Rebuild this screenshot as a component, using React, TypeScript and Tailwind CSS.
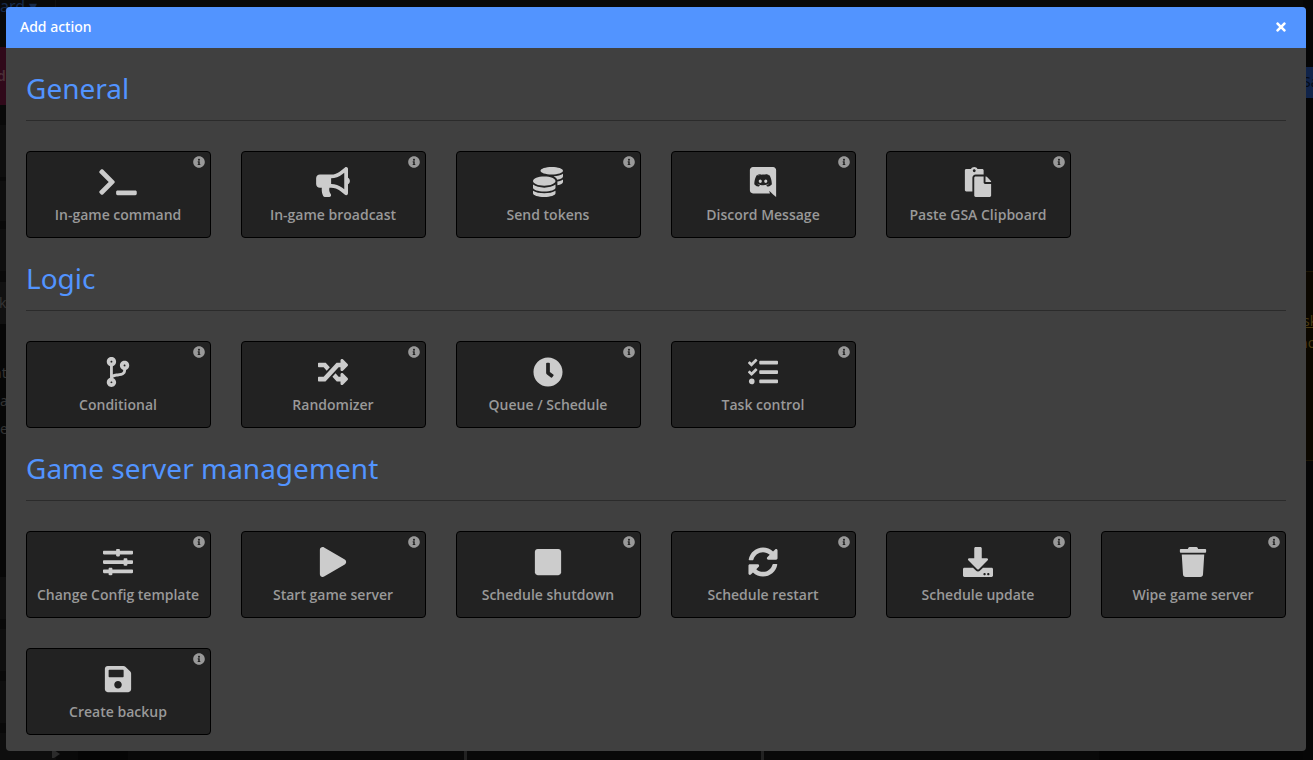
import type { IconType } from "react-icons";
import {
  FaBullhorn, FaClock, FaCodeBranch, FaCoins, FaDownload, FaInfoCircle, FaPaste, FaPlay,
  FaRandom, FaSave, FaSlidersH, FaStop, FaSyncAlt, FaTasks, FaTerminal, FaTimes, FaTrash,
} from "react-icons/fa";

function DiscordIcon({ className }: { className?: string }) {
  return (
    <svg viewBox="0 0 448 512" height="1em" fill="currentColor" className={className} aria-hidden="true">
      <path d="M297.216 243.2c0 15.616-11.52 28.416-26.112 28.416-14.336 0-26.112-12.8-26.112-28.416s11.52-28.416 26.112-28.416c14.592 0 26.112 12.8 26.112 28.416zm-119.552-28.416c-14.592 0-26.112 12.8-26.112 28.416s11.776 28.416 26.112 28.416c14.592 0 26.112-12.8 26.112-28.416.256-15.616-11.52-28.416-26.112-28.416zM448 52.736V512c-64.494-56.994-43.868-38.128-118.784-107.776l13.568 47.36H52.48C23.552 451.584 0 428.032 0 398.848V52.736C0 23.552 23.552 0 52.48 0h343.04C424.448 0 448 23.552 448 52.736zm-72.96 242.688c0-82.432-36.864-149.248-36.864-149.248-36.864-27.648-71.936-26.88-71.936-26.88l-3.584 4.096c43.52 13.312 63.744 32.512 63.744 32.512-60.811-33.329-132.244-33.335-191.232-7.424-9.472 4.352-15.104 7.424-15.104 7.424s21.248-20.224 67.328-33.536l-2.56-3.072s-35.072-.768-71.936 26.88c0 0-36.864 66.816-36.864 149.248 0 0 21.504 37.12 78.08 38.912 0 0 9.472-11.52 17.152-21.248-32.512-9.728-44.8-30.208-44.8-30.208 3.766 2.636 9.976 6.053 10.496 6.4 43.21 24.198 104.588 32.126 159.744 8.96 8.96-3.328 18.944-8.192 29.44-15.104 0 0-12.8 20.992-46.336 30.464 7.68 9.728 16.896 20.736 16.896 20.736 56.576-1.792 78.336-38.912 78.336-38.912z" />
    </svg>
  );
}

type Action = { label: string; icon: IconType | typeof DiscordIcon; iconWidth?: string };
type Group = { title: string; actions: Action[] };

const groups: Group[] = [
  {
    title: "General",
    actions: [
      { label: "In-game command", icon: FaTerminal, iconWidth: "w-[38px]" },
      { label: "In-game broadcast", icon: FaBullhorn, iconWidth: "w-[34px]" },
      { label: "Send tokens", icon: FaCoins },
      { label: "Discord Message", icon: DiscordIcon },
      { label: "Paste GSA Clipboard", icon: FaPaste },
    ],
  },
  {
    title: "Logic",
    actions: [
      { label: "Conditional", icon: FaCodeBranch },
      { label: "Randomizer", icon: FaRandom },
      { label: "Queue / Schedule", icon: FaClock },
      { label: "Task control", icon: FaTasks },
    ],
  },
  {
    title: "Game server management",
    actions: [
      { label: "Change Config template", icon: FaSlidersH },
      { label: "Start game server", icon: FaPlay },
      { label: "Schedule shutdown", icon: FaStop },
      { label: "Schedule restart", icon: FaSyncAlt },
      { label: "Schedule update", icon: FaDownload },
      { label: "Wipe game server", icon: FaTrash },
      { label: "Create backup", icon: FaSave },
    ],
  },
];

function ActionCard({ label, icon: Icon, iconWidth = "w-[30px]" }: Action) {
  return (
    <button
      type="button"
      className="relative flex h-[87px] flex-col items-center rounded border border-black bg-[#222222] pt-[15px] pr-px font-['Open_Sans',sans-serif] hover:bg-[#2a2a2a]"
    >
      <FaInfoCircle className="absolute top-1 right-[5px] text-xs text-[#999999]" aria-hidden="true" />
      <Icon className={`${iconWidth} text-[30px] text-[#cccccc]`} />
      <span className="mt-2 text-sm font-semibold whitespace-nowrap text-[#999999]">{label}</span>
    </button>
  );
}

function ActionGroup({ title, actions }: Group) {
  return (
    <section>
      <h2 className="border-b border-[#2b2b2b] pb-3 text-[28px] leading-[40px] text-[#5294ff]">{title}</h2>
      <div className="mt-[30px] grid grid-cols-6 gap-[30px]">
        {actions.map((action) => (
          <ActionCard key={action.label} {...action} />
        ))}
      </div>
    </section>
  );
}

function DimmedPage() {
  return (
    <div className="absolute inset-0 flex justify-between overflow-hidden bg-[#090909] text-sm" aria-hidden="true">
      <div className="flex w-14 flex-col text-[#333333]">
        <div className="h-[47px] border-r border-[#111111] text-[#16294a]">
          <div className="-mt-1 text-base leading-5">ard ▾</div>
        </div>
        <div className="h-[58px] bg-[#30091a] pt-[19px] leading-5 font-semibold text-[#4a3038]">
          <div className="-ml-[3px]">d</div>
        </div>
        <div className="mt-5 h-[52px] bg-[#0e0e0e]" />
        <div className="mt-1 h-[40px] bg-[#0e0e0e]" />
        <div className="mt-2 h-[42px] bg-[#0e0e0e]" />
        <div className="mt-[11px] h-[42px] bg-[#111111] pt-[11px] leading-5">
          <div className="-ml-px">k</div>
        </div>
        <div className="h-[253px] bg-[#070707] pt-[35px] leading-7">
          <div className="-ml-[7px]">nt</div>
          <div>a</div>
          <div>e</div>
        </div>
        <div className="h-[42px] bg-[#0e0e0e]" />
        <div className="mt-[10px] h-[42px] bg-[#0e0e0e]" />
        <div className="mt-[10px] h-[42px] bg-[#0e0e0e]" />
        <div className="mt-[10px] flex-1 bg-[#0e0e0e]" />
      </div>
      <div className="flex flex-1 items-end">
        <svg viewBox="0 0 8 10" className="-ml-1 h-[10px] w-2 fill-[#2b2b2b]">
          <path d="M0 0h2l6 4-6 4H0z" />
        </svg>
        <div className="ml-[18px] h-[9px] w-[50px] bg-[#050505]" />
        <div className="h-[9px] w-[339px] border-r-[3px] border-[#222222]" />
        <div className="h-[9px] w-[297px] border-r-[3px] border-[#222222]" />
        <div className="ml-[335px] h-[9px] flex-1 bg-[#050505]" />
      </div>
      <div className="flex w-[10px] flex-col bg-[#060606] pt-[67px]">
        <div className="h-[31px] bg-[#11244a] pt-[5px] leading-5 text-[#050a14]">Sa</div>
        <div className="mt-[173px] h-[190px] border-y border-[#1d1605] bg-[#0b0700] pt-[38px] leading-[22px] text-[#4a3a12]">
          <div className="underline">sk</div>
          <div className="-ml-1">no</div>
        </div>
      </div>
    </div>
  );
}

export default function App() {
  return (
    <div className="relative min-h-screen px-[6px] pt-[7px] pb-[9px] font-['Noto_Sans',sans-serif]">
      <DimmedPage />
      <div
        role="dialog"
        aria-modal="true"
        aria-labelledby="dialog-title"
        className="relative mr-px overflow-hidden rounded bg-[#404040]"
      >
        <header className="flex h-[41px] items-center justify-between bg-[#5294ff] pr-[18px] pb-[2px] pl-[14px] text-white">
          <h1 id="dialog-title" className="text-sm font-medium">Add action</h1>
          <button type="button" aria-label="Close">
            <FaTimes className="text-sm" />
          </button>
        </header>
        <div className="flex flex-col gap-5 px-5 pt-5 pb-4">
          {groups.map((group) => (
            <ActionGroup key={group.title} {...group} />
          ))}
        </div>
      </div>
    </div>
  );
}
